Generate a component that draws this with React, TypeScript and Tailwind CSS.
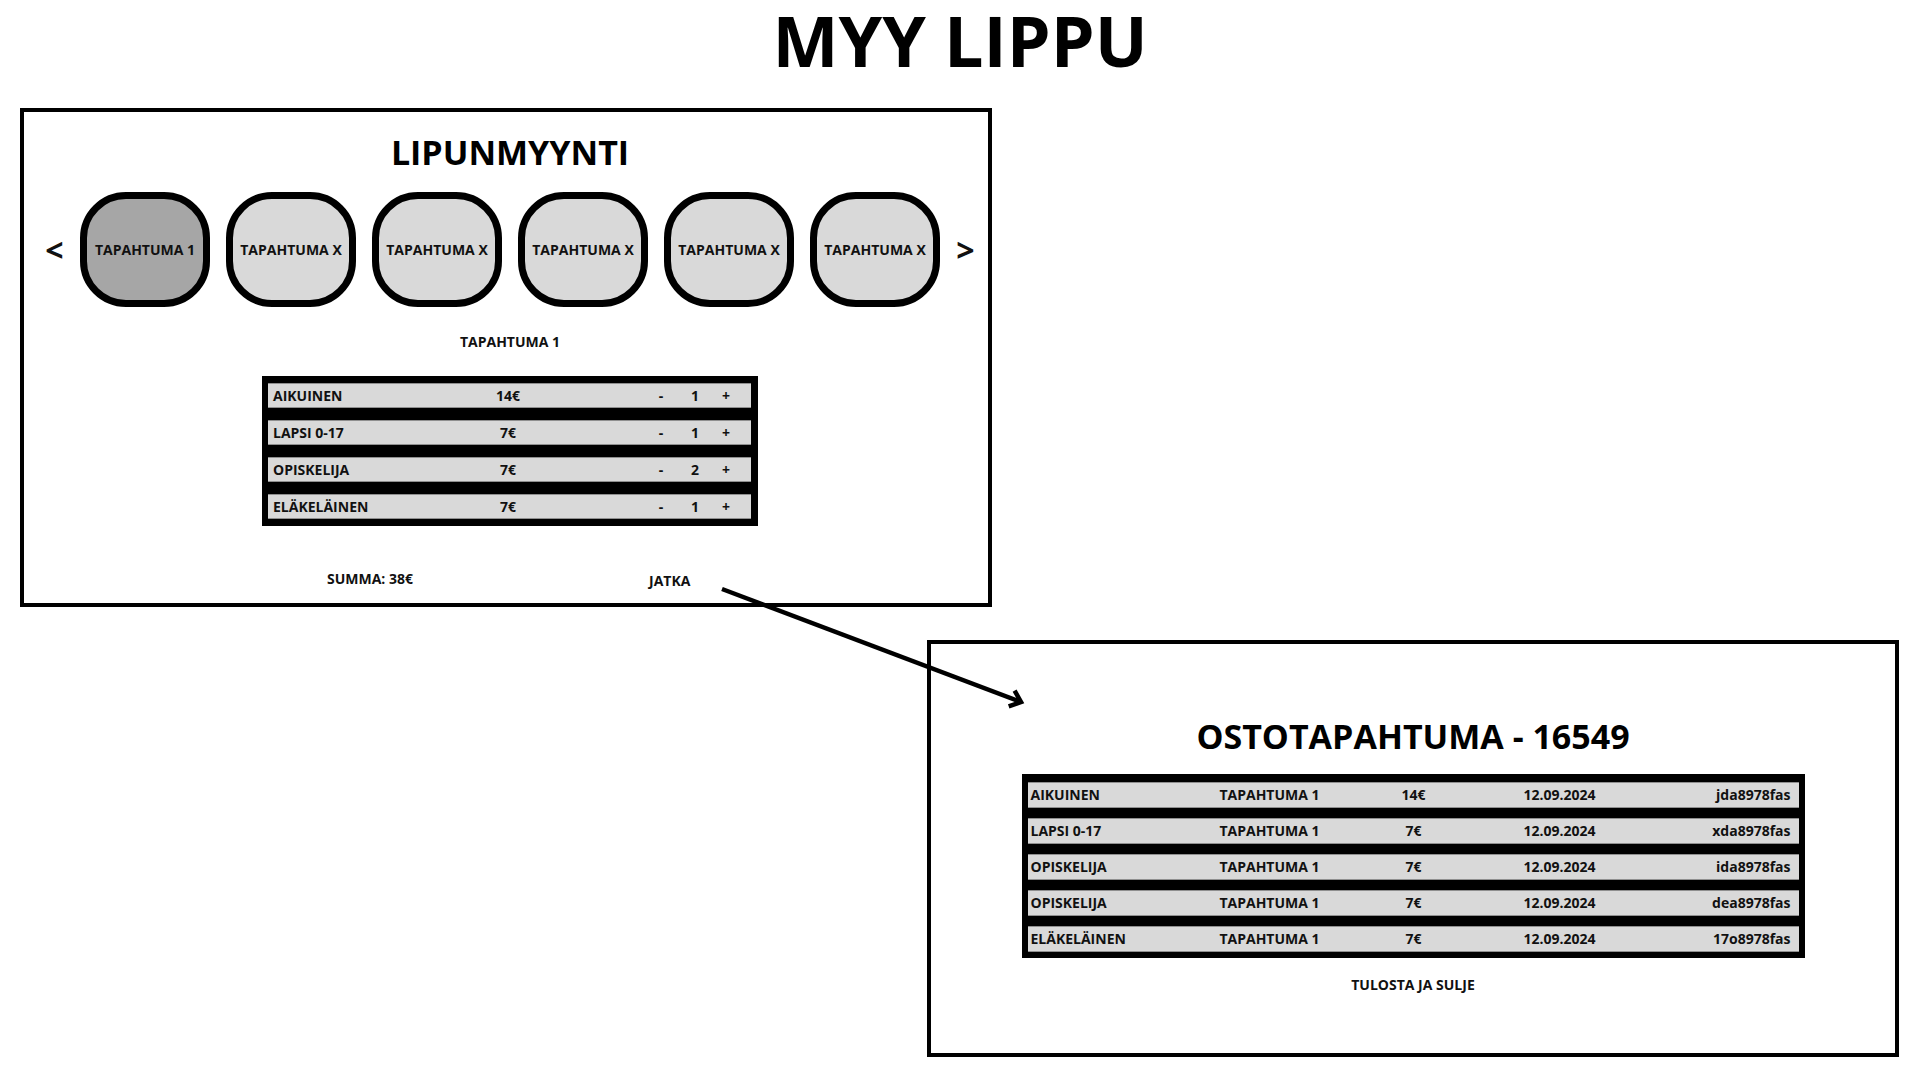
import React from 'react';

interface TicketRow {
  name: string;
  price: string;
  count: number;
}

interface PurchaseRow {
  name: string;
  event: string;
  price: string;
  date: string;
  code: string;
}

const events = ['TAPAHTUMA 1', 'TAPAHTUMA X', 'TAPAHTUMA X', 'TAPAHTUMA X', 'TAPAHTUMA X', 'TAPAHTUMA X'];

const tickets: TicketRow[] = [
  { name: 'AIKUINEN', price: '14€', count: 1 },
  { name: 'LAPSI 0-17', price: '7€', count: 1 },
  { name: 'OPISKELIJA', price: '7€', count: 2 },
  { name: 'ELÄKELÄINEN', price: '7€', count: 1 },
];

const purchases: PurchaseRow[] = [
  { name: 'AIKUINEN', event: 'TAPAHTUMA 1', price: '14€', date: '12.09.2024', code: 'jda8978fas' },
  { name: 'LAPSI 0-17', event: 'TAPAHTUMA 1', price: '7€', date: '12.09.2024', code: 'xda8978fas' },
  { name: 'OPISKELIJA', event: 'TAPAHTUMA 1', price: '7€', date: '12.09.2024', code: 'ida8978fas' },
  { name: 'OPISKELIJA', event: 'TAPAHTUMA 1', price: '7€', date: '12.09.2024', code: 'dea8978fas' },
  { name: 'ELÄKELÄINEN', event: 'TAPAHTUMA 1', price: '7€', date: '12.09.2024', code: '17o8978fas' },
];

function EventCarousel() {
  return (
    <div className="flex items-center h-[115px] shrink-0">
      <div className="w-[51px] flex justify-center text-[32px] leading-none font-bold">&lt;</div>
      <div className="flex gap-[16px]">
        {events.map((ev, i) => (
          <button
            key={i}
            className={
              i === 0
                ? 'w-[130px] h-[115px] rounded-[46px] border-[7px] border-black bg-[#a6a6a6] flex items-center justify-center text-[14px] leading-none font-bold text-[#111]'
                : 'w-[130px] h-[115px] rounded-[46px] border-[7px] border-black bg-[#d9d9d9] flex items-center justify-center text-[14px] leading-none font-bold text-[#111]'
            }
          >
            {ev}
          </button>
        ))}
      </div>
      <div className="w-[51px] flex justify-center text-[32px] leading-none font-bold">&gt;</div>
    </div>
  );
}

function TicketTable() {
  return (
    <div className="w-[496px] bg-black pt-[7px] pb-[7px] pl-[6px] pr-[7px] flex flex-col gap-[12px]">
      {tickets.map((t) => (
        <div
          key={t.name}
          className="h-[25px] bg-[#d9d9d9] border-y border-[#8f8f8f] flex items-center text-[14px] leading-none font-bold text-[#111]"
        >
          <span className="w-[200px] pl-[5px]">{t.name}</span>
          <span className="w-[80px] text-center">{t.price}</span>
          <span className="w-[20px] ml-[103px] text-center">-</span>
          <span className="w-[20px] ml-[14px] text-center">{t.count}</span>
          <span className="w-[20px] ml-[11px] text-center">+</span>
        </div>
      ))}
    </div>
  );
}

function PurchaseTable() {
  return (
    <div className="w-[783px] bg-black pt-[8px] pb-[6px] px-[6px] flex flex-col gap-[10px]">
      {purchases.map((p) => (
        <div
          key={p.code}
          className="h-[26px] bg-[#d9d9d9] border-y border-[#8f8f8f] flex items-center text-[14px] leading-none font-bold text-[#111]"
        >
          <span className="w-[150px] pl-[3px] pb-[1px]">{p.name}</span>
          <span className="w-[184px] text-center">{p.event}</span>
          <span className="w-[104px] text-center">{p.price}</span>
          <span className="w-[188px] text-center">{p.date}</span>
          <span className="flex-1 text-right pr-[8px] pb-[1px]">{p.code}</span>
        </div>
      ))}
    </div>
  );
}

export default function App() {
  return (
    <div className="relative w-[1920px] h-[1080px] bg-white overflow-hidden font-['Open_Sans',sans-serif] text-[#111]">
      <h1 className="h-[75px] pt-[5px] text-center text-[70px] leading-none font-bold text-black">MYY LIPPU</h1>

      {/* lipunmyynti */}
      <section className="ml-[20px] mt-[33px] w-[972px] h-[499px] border-4 border-black flex flex-col items-center pl-[8px]">
        <h2 className="mt-[23px] text-[34px] leading-[35px] font-bold text-black">LIPUNMYYNTI</h2>
        <div className="mt-[22px]">
          <EventCarousel />
        </div>
        <p className="mt-[28px] text-[14px] leading-none font-bold">TAPAHTUMA 1</p>
        <div className="mt-[27px]">
          <TicketTable />
        </div>
        <div className="self-stretch mt-[46px] pl-[295px] flex items-start text-[14px] leading-none font-bold">
          <span className="w-[100px]">SUMMA: 38€</span>
          <button className="ml-[222px] mt-[2px] font-bold leading-none">JATKA</button>
        </div>
      </section>

      {/* ostotapahtuma */}
      <section className="ml-[927px] mt-[33px] w-[972px] h-[417px] border-4 border-black flex flex-col items-center">
        <h2 className="mt-[75px] text-[34px] leading-[35px] font-bold text-black">OSTOTAPAHTUMA - 16549</h2>
        <div className="mt-[20px]">
          <PurchaseTable />
        </div>
        <button className="mt-[20px] text-[14px] leading-none font-bold">TULOSTA JA SULJE</button>
      </section>

      <svg className="absolute inset-0 pointer-events-none" width="1920" height="1080" viewBox="0 0 1920 1080">
        <line x1="722" y1="589" x2="1021" y2="702" stroke="black" strokeWidth="4.5" />
        <polyline points="1014.6,690.7 1021,702 1008.7,706.3" fill="none" stroke="black" strokeWidth="4.5" />
      </svg>
    </div>
  );
}
